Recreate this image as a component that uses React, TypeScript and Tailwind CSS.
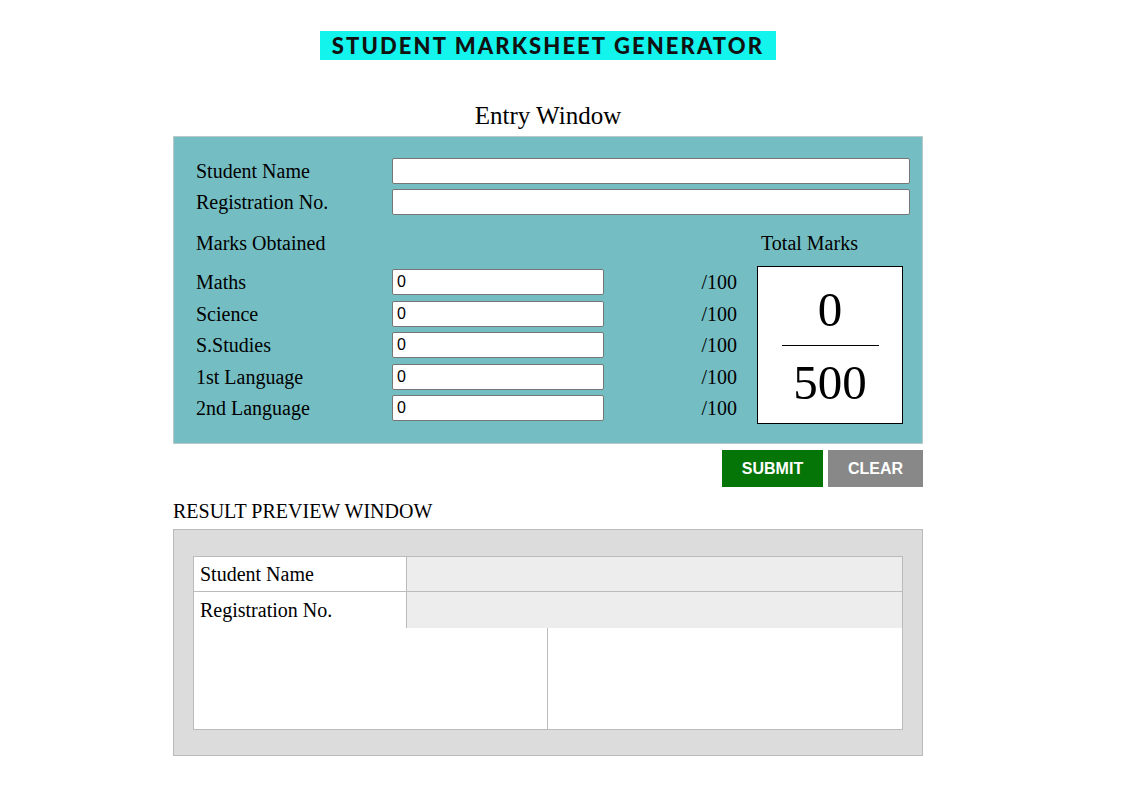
const subjects = ["Maths", "Science", "S.Studies", "1st Language", "2nd Language"];

const serif = { fontFamily: '"Liberation Serif", "Times New Roman", serif' };

const TextBox = ({ value, width }: { value?: string; width: string }) => {
  return (
    <div
      className={`h-[26px] ${width} bg-white border border-[#767676] rounded-[2px] flex items-center pl-[4px] text-[16px] text-black`}
      style={{ fontFamily: '"Liberation Sans", Arial, sans-serif' }}
    >
      {value}
    </div>
  );
};

const App = () => {
  return (
    <div className="w-[1096px] min-h-[789px] bg-white text-black" style={serif}>
      <div className="flex justify-center pt-[31px]">
        <h1
          className="h-[29px] w-[456px] bg-[#12f4ec] flex items-center justify-center text-[22px] tracking-[2.1px] text-[#111]"
          style={{ fontFamily: '"Lato", "Liberation Sans", sans-serif', fontWeight: 900 }}
        >
          STUDENT MARKSHEET GENERATOR
        </h1>
      </div>

      <div className="w-[750px] mx-auto">
        <h2 className="mt-[40px] h-[33px] text-center text-[25px] leading-[31px]">Entry Window</h2>

        <div className="mt-[3px] bg-[#74bec3] border border-[#b9c8c9] pl-[22px] pr-[12px] pt-[21px] pb-[19px] text-[20px]">
          <div className="flex flex-col gap-[5px]">
            <div className="flex items-center h-[26px]">
              <span className="w-[196px]">Student Name</span>
              <TextBox width="flex-1" />
            </div>
            <div className="flex items-center h-[26px]">
              <span className="w-[196px]">Registration No.</span>
              <TextBox width="flex-1" />
            </div>
          </div>

          <div className="mt-[18px] flex">
            <div className="w-[541px]">
              <div className="h-[20px] leading-[20px]">Marks Obtained</div>
              <div className="mt-[16px] flex flex-col gap-[5.5px]">
                {subjects.map((s) => (
                  <div key={s} className="flex items-center h-[26px]">
                    <span className="w-[196px]">{s}</span>
                    <TextBox value="0" width="w-[212px]" />
                    <span className="flex-1 text-right">/100</span>
                  </div>
                ))}
              </div>
            </div>
            <div className="ml-[20px]">
              <div className="h-[20px] leading-[20px] pl-[4px]">Total Marks</div>
              <div className="mt-[13px] w-[146px] h-[158px] bg-white border border-black flex flex-col items-center">
                <div className="mt-[18px] h-[50px] text-[49px] leading-[50px]">0</div>
                <div className="mt-[10px] w-[97px] h-px bg-black" />
                <div className="mt-[12px] h-[50px] text-[49px] leading-[50px]">500</div>
              </div>
            </div>
          </div>
        </div>

        <div
          className="mt-[6px] flex justify-end gap-[5px] text-white font-bold text-[16px]"
          style={{ fontFamily: '"Liberation Sans", Arial, sans-serif' }}
        >
          <button className="w-[101px] h-[37px] bg-[#067508]">SUBMIT</button>
          <button className="w-[95px] h-[37px] bg-[#888888]">CLEAR</button>
        </div>

        <div className="mt-[14px] text-[20px] leading-[20px]">RESULT PREVIEW WINDOW</div>

        <div className="mt-[8px] bg-[#dcdcdc] border border-[#bbbbbb] px-[19px] pt-[26px] pb-[25px]">
          <div className="border border-[#bbbbbb] bg-white text-[20px]">
            <div className="flex h-[35px] border-b border-[#bbbbbb]">
              <div className="w-[213px] border-r border-[#bbbbbb] flex items-center pl-[6px]">Student Name</div>
              <div className="flex-1 bg-[#ededed]" />
            </div>
            <div className="flex h-[36px]">
              <div className="w-[213px] border-r border-[#bbbbbb] flex items-center pl-[6px]">Registration No.</div>
              <div className="flex-1 bg-[#ededed]" />
            </div>
            <div className="flex h-[101px]">
              <div className="w-[354px] border-r border-[#bbbbbb]" />
              <div className="flex-1" />
            </div>
          </div>
        </div>
      </div>
    </div>
  );
};

export default App;
